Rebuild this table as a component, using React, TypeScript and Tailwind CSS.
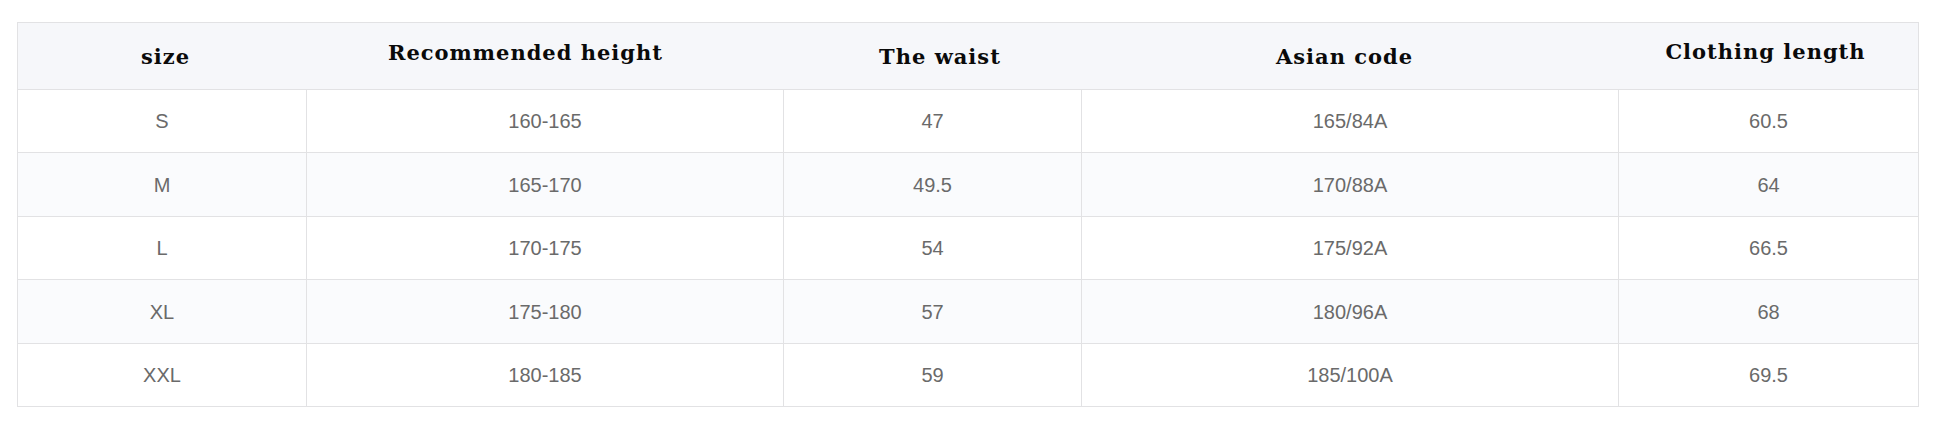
import React from "react";

const rows = [
  ["S", "160-165", "47", "165/84A", "60.5"],
  ["M", "165-170", "49.5", "170/88A", "64"],
  ["L", "170-175", "54", "175/92A", "66.5"],
  ["XL", "175-180", "57", "180/96A", "68"],
  ["XXL", "180-185", "59", "185/100A", "69.5"],
];

const rowH = ["h-[63px]", "h-[64px]", "h-[63px]", "h-[64px]", "h-[62px]"];

export default function App() {
  return (
    <div className="w-[1946px] h-[431px] bg-white pt-[22px] pl-[17px]">
      <div className="w-[1902px] border border-[#e2e2e4]">
        <div
          className="grid grid-cols-[289px_477px_298px_537px_299px] h-[67px] bg-[#f6f7fa] border-b border-[#e2e2e4] text-[21px] font-bold text-[#0a0a0a] tracking-[1px]"
          style={{ fontFamily: '"DejaVu Serif", "Liberation Serif", serif' }}
        >
          <div className="flex items-center justify-center pt-[2px] pl-[6px]">size</div>
          <div className="flex items-center justify-center pr-[40px] pb-[6px]">Recommended height</div>
          <div className="flex items-center justify-center pl-[14px] pt-[2px]">The waist</div>
          <div className="flex items-center justify-center pr-[12px] pt-[2px]">Asian code</div>
          <div className="flex items-center justify-center pb-[8px] pr-[6px]">Clothing length</div>
        </div>
        {rows.map((r, i) => (
          <div
            key={i}
            className={`grid grid-cols-[289px_477px_298px_537px_299px] ${rowH[i]} ${i % 2 === 1 ? "bg-[#fafbfd]" : "bg-white"} ${i < rows.length - 1 ? "border-b border-[#e2e2e4]" : ""} text-[20px] text-[#6a6a6a]`}
            style={{ fontFamily: '"Liberation Sans", Arial, sans-serif' }}
          >
            {r.map((c, j) => (
              <div
                key={j}
                className={`flex items-center justify-center ${j < 4 ? "border-r border-[#e2e2e4]" : ""}`}
              >
                {c}
              </div>
            ))}
          </div>
        ))}
      </div>
    </div>
  );
}
